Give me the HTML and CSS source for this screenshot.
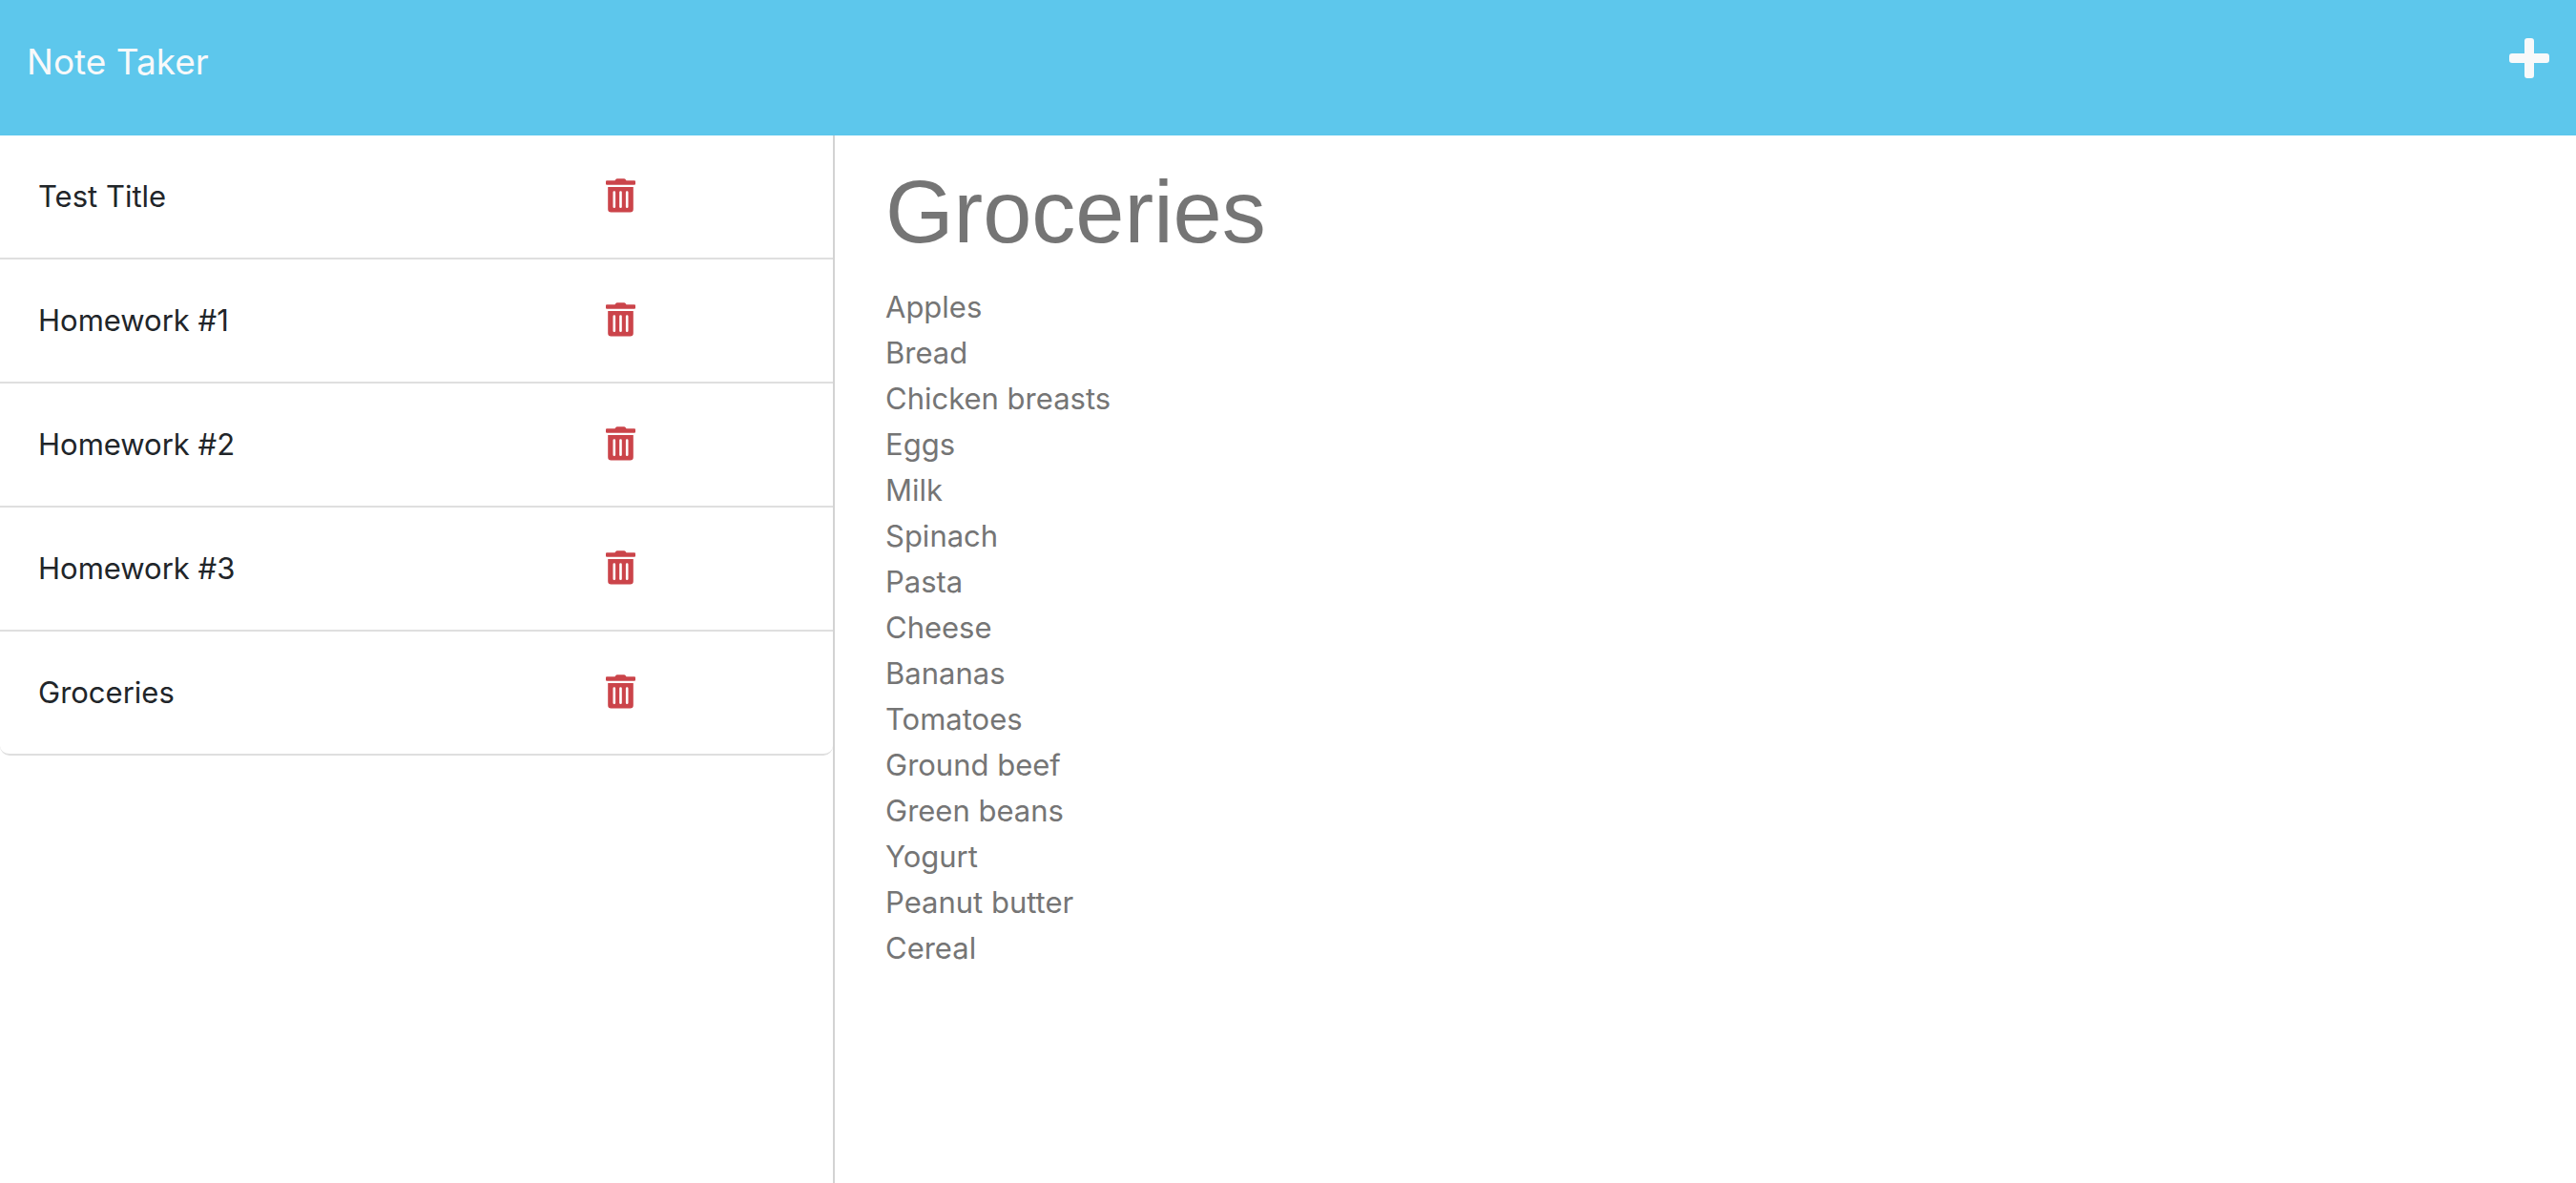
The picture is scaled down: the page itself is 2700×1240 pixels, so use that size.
FILE: index.html
```html
<!DOCTYPE html>
<html lang="en">
<head>
<meta charset="utf-8">
<meta name="viewport" content="width=device-width, initial-scale=1">
<title>Note Taker</title>
<link rel="stylesheet" href="styles.css">
</head>
<body>
<svg class="sprite" aria-hidden="true">
  <symbol id="trash" viewBox="0 0 31 36">
    <path fill-rule="evenodd" d="M1 2.3H9.5L10.6 .8Q11 .2 11.8 .2H19.2Q20 .2 20.4 .8L21.5 2.3H30Q31 2.3 31 3.3V5.8Q31 6.8 30 6.8H1Q0 6.8 0 5.8V3.3Q0 2.3 1 2.3ZM2.2 9H28.8V32.2Q28.8 35.5 25.5 35.5H5.5Q2.2 35.5 2.2 32.2ZM8.8 13.2Q7.5 13.2 7.5 14.5V29.8Q7.5 31.1 8.8 31.1Q10.1 31.1 10.1 29.8V14.5Q10.1 13.2 8.8 13.2ZM15.5 13.2Q14.2 13.2 14.2 14.5V29.8Q14.2 31.1 15.5 31.1Q16.8 31.1 16.8 29.8V14.5Q16.8 13.2 15.5 13.2ZM22.2 13.2Q20.9 13.2 20.9 14.5V29.8Q20.9 31.1 22.2 31.1Q23.5 31.1 23.5 29.8V14.5Q23.5 13.2 22.2 13.2Z"/>
  </symbol>
</svg>
<header class="navbar">
  <a class="brand" href="#">Note Taker</a>
  <button class="icon-button new-note" type="button" aria-label="New note">
    <svg width="42" height="42" viewBox="0 0 42 42" aria-hidden="true"><path d="M19 0h4q3 0 3 3v13h13q3 0 3 3v4q0 3-3 3H26v13q0 3-3 3h-4q-3 0-3-3V26H3q-3 0-3-3v-4q0-3 3-3h13V3q0-3 3-3z"/></svg>
  </button>
</header>
<main class="layout">
  <aside class="sidebar">
    <ul class="note-list">
      <li class="note"><span>Test Title</span><button class="icon-button delete" type="button" aria-label="Delete Test Title"><svg width="31" height="36"><use href="#trash"/></svg></button></li>
      <li class="note"><span>Homework #1</span><button class="icon-button delete" type="button" aria-label="Delete Homework #1"><svg width="31" height="36"><use href="#trash"/></svg></button></li>
      <li class="note"><span>Homework #2</span><button class="icon-button delete" type="button" aria-label="Delete Homework #2"><svg width="31" height="36"><use href="#trash"/></svg></button></li>
      <li class="note"><span>Homework #3</span><button class="icon-button delete" type="button" aria-label="Delete Homework #3"><svg width="31" height="36"><use href="#trash"/></svg></button></li>
      <li class="note"><span>Groceries</span><button class="icon-button delete" type="button" aria-label="Delete Groceries"><svg width="31" height="36"><use href="#trash"/></svg></button></li>
    </ul>
  </aside>
  <section class="editor">
    <input class="note-title" type="text" aria-label="Note title" value="Groceries" readonly>
    <textarea class="note-text" aria-label="Note text" rows="16" readonly>Apples
Bread
Chicken breasts
Eggs
Milk
Spinach
Pasta
Cheese
Bananas
Tomatoes
Ground beef
Green beans
Yogurt
Peanut butter
Cereal</textarea>
  </section>
</main>
</body>
</html>
```

FILE: styles.css
```css
* {
  box-sizing: border-box;
}

body {
  margin: 0;
  min-height: 100vh;
  display: flex;
  flex-direction: column;
  background: #fff;
  color: #212529;
  font-family: Inter, "Liberation Sans", sans-serif;
  font-size: 31px;
  line-height: 48px;
}

.sprite {
  display: none;
}

.navbar {
  display: flex;
  justify-content: space-between;
  align-items: flex-start;
  padding: 35px 28px 47px;
  background: #5dc7ec;
}

.brand {
  color: #f8f9fa;
  font-size: 37px;
  line-height: 60px;
  text-decoration: none;
}

.icon-button {
  display: block;
  padding: 0;
  border: 0;
  background: none;
  cursor: pointer;
}

.icon-button svg {
  display: block;
  fill: currentColor;
}

.new-note {
  margin-top: 5px;
  color: #f8f9fa;
}

.layout {
  flex: 1;
  display: grid;
  grid-template-columns: 1fr 2fr;
}

.sidebar {
  margin-right: 25px;
  border-right: 2px solid #d3d3d3;
}

.note-list {
  margin: 0;
  padding: 0;
  list-style: none;
}

.note {
  display: grid;
  grid-template-columns: 3fr 1fr;
  align-items: center;
  padding: 40px;
  border-bottom: 2px solid #dfdfdf;
}

.note:last-child {
  border-radius: 0 0 10px 10px;
}

.delete {
  justify-self: start;
  padding-bottom: 2px;
  color: #cb444a;
}

.editor {
  display: flex;
  flex-direction: column;
  gap: 16px;
  padding: 20px 28px;
}

.note-title,
.note-text {
  width: 100%;
  padding: 0;
  border: 0;
  outline: 0;
  background: none;
  color: #757575;
  font: inherit;
}

.note-title {
  height: 120px;
  font-family: "Liberation Sans", Arial, sans-serif;
  font-size: 92px;
  line-height: 120px;
}

.note-text {
  resize: none;
}
```
